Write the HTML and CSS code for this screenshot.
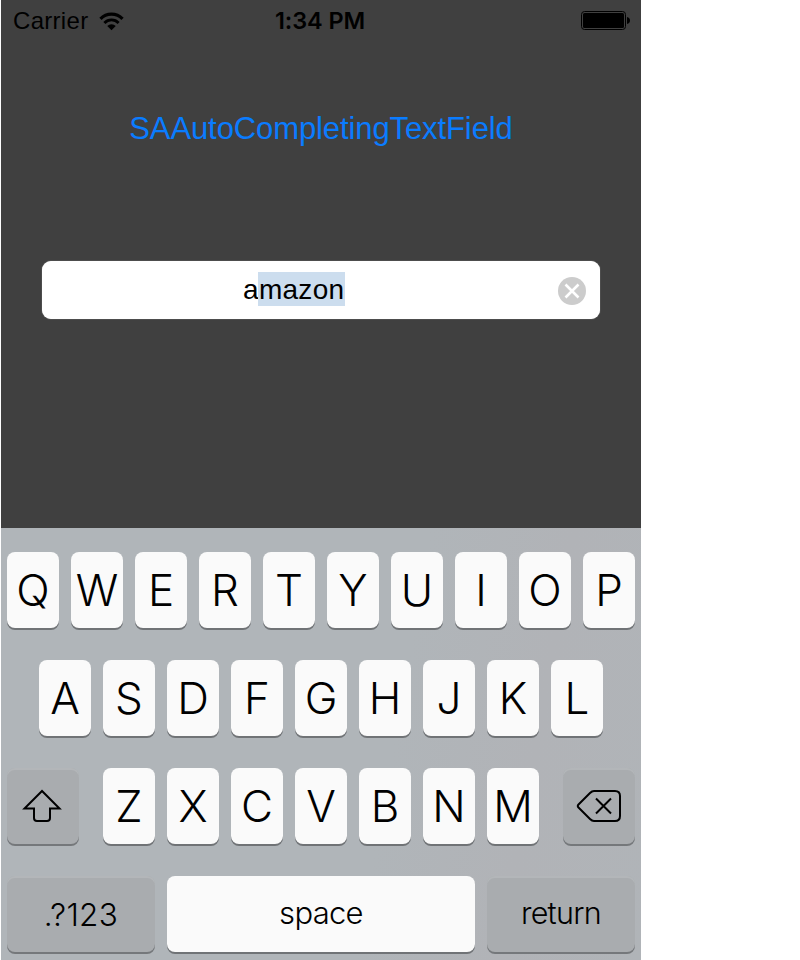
FILE: index.html
```
<!DOCTYPE html>
<html lang="en">
<head>
<meta charset="utf-8">
<title>SAAutoCompletingTextField</title>
<link rel="stylesheet" href="styles.css">
</head>
<body>
<main class="phone">
  <header class="status">
    <div class="status-left">
      <span class="carrier">Carrier</span>
      <svg class="wifi" width="25" height="19" viewBox="0 0 26 20">
        <path d="M1.4 7.2a16.2 16.2 0 0 1 23.2 0" fill="none" stroke="#000" stroke-width="3.4"/>
        <path d="M5.5 11.5a10.4 10.4 0 0 1 15 0" fill="none" stroke="#000" stroke-width="3"/>
        <path d="M8.5 14.7a6.3 6.3 0 0 1 9 0L13 19.2z"/>
      </svg>
    </div>
    <span class="time">1:34 PM</span>
    <svg class="battery" width="50" height="20" viewBox="0 0 50 20">
      <rect x=".5" y=".5" width="44" height="18" rx="3" fill="none" stroke="#000"/>
      <rect x="2" y="2" width="41" height="15" rx="1.5"/>
      <path d="M46 6q3 .7 3 3.500t-3 3.500z"/>
    </svg>
  </header>
  <h1 class="title">SAAutoCompletingTextField</h1>
  <div class="field">
    <span class="value">a<span class="selected">mazon</span></span>
    <svg class="clear" width="28" height="28" viewBox="0 0 28 28">
      <circle cx="14" cy="14" r="14" fill="#ccc"/>
      <path d="M7.500 7.500l13 13M20.500 7.500l-13 13" stroke="#fff" stroke-width="2.600"/>
    </svg>
  </div>
  <section class="keyboard">
    <div class="row">
      <span class="key">Q</span><span class="key">W</span><span class="key">E</span><span class="key">R</span><span class="key">T</span><span class="key">Y</span><span class="key">U</span><span class="key">I</span><span class="key">O</span><span class="key">P</span>
    </div>
    <div class="row">
      <span class="key">A</span><span class="key">S</span><span class="key">D</span><span class="key">F</span><span class="key">G</span><span class="key">H</span><span class="key">J</span><span class="key">K</span><span class="key">L</span>
    </div>
    <div class="row spread">
      <span class="key dark icon">
        <svg width="40" height="34" viewBox="0 0 40 34"><path d="M20 2L2.500 19.500H12V29q0 3 3 3h10q3 0 3-3v-9.500h9.500z" fill="none" stroke="#000" stroke-width="2"/></svg>
      </span>
      <div class="row letters">
        <span class="key">Z</span><span class="key">X</span><span class="key">C</span><span class="key">V</span><span class="key">B</span><span class="key">N</span><span class="key">M</span>
      </div>
      <span class="key dark icon delete">
        <svg width="46" height="34" viewBox="0 0 46 34"><path d="M18 2h21q5 0 5 5v20q0 5-5 5H18q-2 0-4-2L2.500 18.500q-1.500-1.500 0-3L14 4q2-2 4-2zM20 9.500l15 15M35 9.500l-15 15" fill="none" stroke="#000" stroke-width="2"/></svg>
      </span>
    </div>
    <div class="row">
      <span class="key dark wide numbers">.?123</span>
      <span class="key space">space</span>
      <span class="key dark wide return">return</span>
    </div>
  </section>
</main>
</body>
</html>
```

FILE: styles.css
```
* { box-sizing: border-box; }
body {
  margin: 0;
  background: #fff;
  font-family: "Liberation Sans", sans-serif;
  color: #000;
}
.phone {
  display: flex;
  flex-direction: column;
  width: 640px;
  height: 960px;
  margin-left: 1px;
  background: #404040;
  overflow: hidden;
}
.status {
  display: grid;
  grid-template-columns: 1fr auto 1fr;
  align-items: center;
  height: 40px;
  padding: 1px 10px 0 12px;
  font-size: 24px;
  line-height: 40px;
}
.status-left { display: flex; align-items: center; gap: 11px; }
.carrier { letter-spacing: 0.3px; }
.time {
  margin-right: 4px;
  font-family: Inter, sans-serif;
  font-weight: 600;
  font-size: 23.5px;
  letter-spacing: -0.1px;
}
.battery { justify-self: end; }
.title {
  margin: 69px 0 0;
  height: 40px;
  font-size: 31px;
  font-weight: 400;
  line-height: 40px;
  letter-spacing: -0.1px;
  text-align: center;
  color: #0a7cff;
}
.field {
  display: flex;
  align-items: center;
  justify-content: space-between;
  flex: none;
  width: 558px;
  height: 58px;
  margin: 112px 0 0 41px;
  padding: 0 14px 0 201px;
  border-radius: 9px;
  background: #fff;
  box-shadow: 0 0 1px #ccc;
}
.value { display: flex; margin-top: -2px; font-size: 28px; line-height: 36px; height: 34px; letter-spacing: 0.3px; }
.selected { margin-left: -1px; padding: 0 1px; background: #ccddee; }
.clear { margin-top: 2px; }
.keyboard {
  display: flex;
  flex-direction: column;
  gap: 32px;
  height: 432px;
  margin-top: auto;
  padding: 24px 6px 0;
  background: linear-gradient(100deg, #b0b5b9 60%, #b1b3b7 80%, #b0b4b8);
  font-family: Inter, sans-serif;
  font-weight: 300;
}
.row { display: flex; justify-content: center; gap: 12px; }
.spread { justify-content: space-between; gap: 0; }
.key {
  display: flex;
  align-items: center;
  justify-content: center;
  width: 52px;
  height: 76px;
  border-radius: 8px;
  background: #fafafa;
  box-shadow: 0 2px 0 #707376;
  font-size: 44px;
  line-height: 76px;
}
.dark {
  background: #a9acaf;
  box-shadow: 0 2px 0 #75787b, inset 0 2px 0 #b3b6b9;
}
.icon { width: 72px; padding-right: 2px; }
.delete { padding-right: 1px; }
.wide { width: 148px; }
.space { width: 308px; padding-bottom: 2px; font-size: 31px; letter-spacing: -0.7px; }
.numbers { padding-top: 2px; font-size: 31.5px; letter-spacing: 0.3px; }
.return { padding-bottom: 2px; font-size: 30.5px; letter-spacing: -0.7px; }
```
